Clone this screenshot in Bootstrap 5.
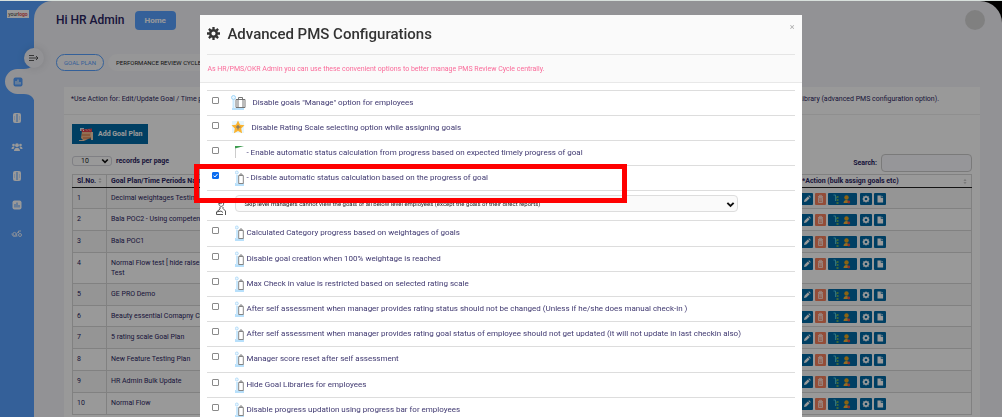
<!DOCTYPE html>
<html lang="en">
<head>
<meta charset="utf-8">
<meta name="viewport" content="width=device-width, initial-scale=1">
<title>Advanced PMS Configurations</title>
<link rel="stylesheet" href="https://cdn.jsdelivr.net/npm/bootstrap@5.3.0/dist/css/bootstrap.min.css">
<style>
body{font-family:Roboto,"Liberation Sans",sans-serif;font-size:8px;line-height:10px;color:#2a2462;background:#000}
.shell{border-top:1px solid #d8e0dc;background:linear-gradient(to right,#57a1ff 50%,#000 50%);min-height:100vh}
.side{width:34px;background:#57a1ff;z-index:2}
.side a{height:29px}
.side .brand{margin:9px 0 0 7px;width:22px;height:8px;background:#fff;font-size:5px;line-height:8px;color:#333;text-decoration:none}
.brand b{color:#d33;font-weight:500}
.side .current{height:49px;margin:39px 0 -3px;position:relative}
.current .notch{position:absolute;left:0;top:0}
.current .glyph{position:relative}
.toggler{position:absolute;left:24px;top:47px;width:20px;height:20px;background:#f3f3f8;z-index:3;box-shadow:0 0 8px rgba(0,0,0,.12)}
.page{background:#f3f3f8;border-radius:18px 22px 0 0;padding:0 22px 0 22px;min-height:100vh}
.hello{font-size:12px;line-height:16px;font-weight:500;margin:0 2px 0 0}
.topline{padding:9px 0 0;margin-right:-5px}
.home-btn{background:#57a1ff;color:#fff;font-size:8px;font-weight:700;line-height:9px;padding:5px 10px;border-radius:4px;border:0}
.avatar{width:20px;height:20px;background:#d6d6d6}
.tabs{margin-top:24px;gap:4px}
.tabs a{font-size:6px;line-height:9px;padding:3px 7px;border-radius:9px;background:#fafafc;color:#222;text-decoration:none;border:1px solid #fafafc;white-space:nowrap}
.tabs a.on{border-color:#57a1ff;color:#57a1ff}
.panel{background:#fff;margin:16px 0 0 8px}
.panel-note{padding:7px 41px 10px 7px;border-bottom:1px solid #eee;white-space:nowrap;font-size:7px;line-height:10px}
.panel-main{padding:9px 8px 8px}
.add-btn{background:#006aa5;color:#fff;font-size:7px;font-weight:700;line-height:10px;padding:3px 6px 3px 7px;border:0;border-radius:0}
.count-row{margin-top:10px;font-weight:700;font-size:7px}
.len-select{width:40px;height:10px;border:1px solid #d5d5dd;border-radius:3px;font-size:7px;line-height:8px;padding:0 0 0 8px;background:#fff;color:#222;appearance:none}
.chev{position:absolute;right:3px;top:1px;pointer-events:none}
.search-box{width:91px;height:18px;border:1px solid #ccc;border-radius:4px;background:#fbfbff}
.plans{width:100%;border-collapse:collapse;margin-top:2px;border:1px solid #d8d8d8}
.plans th{height:13px;padding:0 0 0 4px;border-bottom:1px solid #222;border-right:1px solid #d8d8d8;white-space:nowrap;font-weight:700;font-size:7px;line-height:11px}
.plans td{height:22px;padding:5px 0 0 4px;vertical-align:top;border:1px solid #d8d8d8;font-size:7px;white-space:nowrap}
.plans tr:nth-child(odd) td{background:#f8f8f8}
.plans tbody tr:first-child td{height:21px;border-top-color:#222}
.plans tbody tr:nth-child(6n) td{height:21px}
.plans tbody tr:nth-child(4) td{height:31px}
.plans tbody td:last-child{padding:5px 0 0 3px}
.act{background:#006aa5;border:0;border-radius:1px;width:12px;height:12px;padding:0}
.act.del{background:#f6805e;width:11px}
.act.wide{width:29px;margin-right:1px}
.pager button{height:12px;border:1px solid #ccc;background:#fff;padding:0}
.pager .word{width:46px}
.pager .next{width:35px}
.pager .num{width:16px}
.veil{position:fixed;inset:1px 0 0;background:rgba(0,0,0,.4);z-index:5}
.modal{z-index:6;overflow:hidden}
.config{width:60%;max-width:none;margin:15px auto 0}
.config .modal-content{border:0;border-radius:2px;color:#3f3870}
.config-head{background:#fafafa;border-bottom:1px solid #e8e8e8;padding:0 7px}
.config-title{border-bottom:1px solid #e5e5e5;height:40px;padding-bottom:2px;gap:7px}
.config-title h1{font-size:15px;line-height:20px;font-weight:500;color:#333;margin:0}
.closer{position:absolute;right:7px;top:7px;border:0;background:none;padding:0;font-size:9px;line-height:10px;color:#aaa}
.hint{color:#fa6b9a;font-size:7px;line-height:10px;margin:0;padding:9px 0 8px}
.options{margin:7px 7px 0;padding:0;list-style:none;border-top:1px solid #ddd}
.options li{height:25px;border-bottom:1px solid #ddd;position:relative}
.options li.tall{height:26px}
.options li.pick{height:30px;padding:4px 0 0 8px}
.options input{appearance:none;width:7px;height:7px;margin:6px 12px 0 5px;flex:none;border:1px solid #8a8a8a;border-radius:1px;background:#fff}
.options input:checked{border-color:#0b6cf0;background:#0b6cf0 url("data:image/svg+xml,%3Csvg xmlns='http://www.w3.org/2000/svg' viewBox='0 0 5 5'%3E%3Cpath d='M.5 2.600l1.400 1.400L4.600.9' fill='none' stroke='white'/%3E%3C/svg%3E")}
.options label{white-space:nowrap;padding:7px 0 0 2px;height:24px}
.options svg{flex:none}
.scope{width:100%;height:17px;border:1px solid #ddd;border-radius:4px;background:#fafafa;appearance:none;font-size:6px;line-height:10px;padding:0 8px;color:#222}
.scope-wrap{width:503px;max-width:88%;position:relative}
.marker{position:absolute;left:-13px;top:-2px;width:433px;height:39px;border:5px solid red;z-index:4;pointer-events:none}
</style>
</head>
<body class="overflow-hidden">
<svg class="d-none">
<symbol id="book" viewBox="0 0 10 10"><rect x="1" width="8" height="10" rx="2" fill="#fff"/><path d="M5 1v8" stroke="#57a1ff"/><path d="M2.500 3v4M7.500 3v4" stroke="#b5d4ff" stroke-width=".6"/></symbol>
<symbol id="chart" viewBox="0 0 10 10"><rect x=".5" y=".5" width="9" height="9" rx="2" fill="currentColor"/><path d="M3 4v3.500M5 2.500v5M7 5v2.500" stroke="var(--ink)" stroke-width="1"/></symbol>
<symbol id="people" viewBox="0 0 12 10"><g fill="#fff"><circle cx="6" cy="3.200" r="1.900"/><circle cx="2.500" cy="3" r="1.300"/><circle cx="9.500" cy="3" r="1.300"/><path d="M3 9c0-4.500 6-4.500 6 0zM.5 7C.5 4.500 3 4 3.500 5L2.500 7zM11.500 7C11.500 4.500 9 4 8.500 5l1 2z"/></g></symbol>
<symbol id="hands" viewBox="0 0 12 10"><g fill="none" stroke="#e4efff" stroke-width="1"><circle cx="3.500" cy="5" r="1.600"/><circle cx="9" cy="6" r="1.500"/><path d="M1 4.500c0 3 3 4 5 2M6 7.500c-1-2 0-4 1-4.500M7.500 4V2h2.500"/></g></symbol>
<symbol id="chev" viewBox="0 0 8 8"><path d="M1.200 2.500L4 5.300l2.800-2.800" fill="none" stroke="#111" stroke-width="1.700"/></symbol>
<symbol id="case" viewBox="0 0 9 16"><path d="M0 13h9v3H0z" fill="#b8e0fb"/><path d="M1 5h2v9H1z" fill="#c9e8fd"/><circle cx="1.800" cy="2.500" r="1.500" fill="#eaf6ff" stroke="#9fd3f7" stroke-width=".7"/><path d="M3.700 5.500h4.600v8H3.700zM5 5.500V4h2v1.500" fill="#fff" stroke="#858585" stroke-width="1"/></symbol>
<symbol id="casewide" viewBox="0 0 15 15"><path d="M1 13h12v2H1z" fill="#b8e0fb"/><path d="M1.500 5h2v8h-2z" fill="#c9e8fd"/><circle cx="2.500" cy="2.500" r="2" fill="#eaf6ff" stroke="#8ecbf5" stroke-width=".8"/><path d="M5 4.500h9v8H5zM7.500 4.500v-2h4v2M7 4.500v8M12 4.500v8" fill="#fff" stroke="#666" stroke-width=".9"/></symbol>
<symbol id="star" viewBox="0 0 14 14"><path d="M1 1h12v12H1z" fill="#e6f6fd"/><path d="M7 .5l2 4.300 4.500.5-3.300 3.200.9 4.800L7 11l-4.100 2.300.9-4.800L.5 5.300 5 4.800z" fill="#fbb32f"/><path d="M7 5v4.500M5 7h4.500" stroke="#6b6d72"/></symbol>
<symbol id="flag" viewBox="0 0 9 14"><path d="M.5 2v11" stroke="#ccc"/><path d="M0 1h9L1 3.300H0z" fill="#3c9c4f"/></symbol>
<symbol id="person" viewBox="0 0 12 17"><path d="M6 1.500c2.500 0 3 2 2.500 4C8 8 4.500 8 4 5.500 3.500 3.500 4 1.500 6 1.500zM5 8v2L1.500 13v2.500H8M8 8v1.500L10.500 12v4M1.500 13L6 12l2 1.500M4 4.500C6 5 7.500 4 8 3" fill="none" stroke="#555" stroke-width="1"/></symbol>
<symbol id="sorter" viewBox="0 0 5 8"><path d="M.5 3.300L2.500.5l2 2.800zM.5 4.700l2 2.800 2-2.800z" fill="#ccc"/></symbol>
<symbol id="pen" viewBox="0 0 12 12"><path d="M3 9l.5-2.300 3.300-3.300 1.800 1.800-3.300 3.300zM7.300 2.900l.8-.7 1.700 1.700-.7.800z" fill="#fff"/></symbol>
<symbol id="bin" viewBox="0 0 11 12"><path d="M3 3.500h5M4.500 3V2.300h2V3M3.500 4.500v5h4v-5zM5 5v3.500M6.200 5v3.500" fill="none" stroke="#ffe1d8" stroke-width=".9"/></symbol>
<symbol id="team" viewBox="0 0 29 12"><path d="M7.500 2v6M7.500 5H9M5.500 2h2" stroke="#4dc4d8" fill="none"/><path d="M8.500 4h2M8.500 7h2M8.500 10h2" stroke="#8ac34a" stroke-width="1.500"/><circle cx="18.500" cy="4.500" r="2.200" fill="#e8a51f"/><path d="M15.500 10c0-4 5.500-4 5.500 0z" fill="#f4b63a"/><circle cx="20.800" cy="9" r="1.400" fill="#ee5348"/></symbol>
<symbol id="cog" viewBox="0 0 12 12"><circle cx="6" cy="6" r="2.200" fill="none" stroke="#fff" stroke-width="1.700"/><path d="M6 2.500v1M6 8.500v1M2.500 6h1M8.500 6h1M3.500 3.500l.7.700M7.800 7.800l.7.700M3.500 8.500l.7-.7M7.800 4.200l.7-.7" stroke="#fff"/></symbol>
<symbol id="sheet" viewBox="0 0 12 12"><path d="M3.500 2.500h3.300v2.300h2.300V9.500H3.500zM7.500 2.500l1.600 1.600H7.500z" fill="#fff"/></symbol>
</svg>

<div class="shell d-flex position-relative">
  <nav class="side d-flex flex-column flex-shrink-0" aria-label="Main">
    <a class="brand text-center" href="#">your<b>logo</b></a>
    <a class="current d-flex align-items-center ps-3" href="#" aria-label="Goals">
      <svg class="notch" width="35" height="49" viewBox="0 0 35 49"><path d="M35 0c0 8-4 12-11 12h-6.500a12.500 12.500 0 0 0 0 25H24c7 0 11 4 11 12z" fill="#f3f3f8"/></svg>
      <svg class="glyph" width="10" height="10" style="color:#57a1ff;--ink:#fff;margin-left:-3px"><use href="#chart"/></svg></a>
    <a class="d-flex align-items-center justify-content-center" href="#" aria-label="Reviews"><svg width="10" height="10"><use href="#book"/></svg></a>
    <a class="d-flex align-items-center justify-content-center" href="#" aria-label="Team"><svg width="12" height="10"><use href="#people"/></svg></a>
    <a class="d-flex align-items-center justify-content-center" href="#" aria-label="Journal"><svg width="10" height="10"><use href="#book"/></svg></a>
    <a class="d-flex align-items-center justify-content-center" href="#" aria-label="Reports"><svg width="10" height="10" style="color:#fff;--ink:#57a1ff"><use href="#chart"/></svg></a>
    <a class="d-flex align-items-center justify-content-center" href="#" aria-label="Feedback"><svg width="12" height="10"><use href="#hands"/></svg></a>
  </nav>
  <button class="toggler rounded-circle border-0 p-0 d-flex align-items-center justify-content-center" aria-label="Toggle menu"><svg width="10" height="8" viewBox="0 0 10 8"><path d="M0 1.500h5M0 4h9M0 6.500h5M7 2l2 2-2 2" fill="none" stroke="#333" stroke-width=".8"/></svg></button>

  <main class="page flex-grow-1">
    <header class="topline d-flex align-items-center">
      <h2 class="hello">Hi HR Admin</h2>
      <button class="home-btn ms-2">Home</button>
      <span class="avatar rounded-circle ms-auto"></span>
    </header>
    <nav class="tabs d-flex" aria-label="Sections">
      <a class="on" href="#">GOAL PLAN</a><a href="#">PERFORMANCE REVIEW CYCLE</a>
    </nav>
    <section class="panel">
      <div class="panel-note d-flex justify-content-between"><span>*Use Action for: Edit/Update Goal / Time periods</span><span>from Library (advanced PMS configuration option).</span></div>
      <div class="panel-main">
        <button class="add-btn d-inline-flex align-items-center gap-1"><svg width="15" height="14" viewBox="0 0 15 14"><path d="M1 1h4v3H1z" fill="#cfe9f5"/><path d="M3 4l8-2 2 8-8 4-3-3z" fill="#f6b98b"/><path d="M2 2.500l11-1v3.500H3z" fill="#e5404b"/><path d="M4 3l1 1M7 2.500l1 1M10 2.500l1 1" stroke="#fff"/><path d="M3 8h8M4 11h9" stroke="#d9713d"/><path d="M0 13h5v1H0zM12 5h2v8h-2z" fill="#f2d4b5"/></svg>Add Goal Plan</button>
        <div class="count-row d-flex align-items-center">
          <div class="position-relative d-flex me-1 mb-1"><select id="len" class="len-select"><option>10</option></select><svg class="chev" width="8" height="8"><use href="#chev"/></svg></div>
          <label for="len" class="mb-1">records per page</label>
          <label for="find" class="ms-auto me-1">Search:</label><input id="find" class="search-box">
        </div>
        <table class="plans">
          <colgroup><col style="width:34px"><col><col style="width:174px"></colgroup>
          <thead><tr><th>Sl.No. <svg width="4" height="7"><use href="#sorter"/></svg></th><th>Goal Plan/Time Periods Name</th><th><div class="d-flex justify-content-between align-items-center pe-1">*Action (bulk assign goals etc)<svg width="4" height="7"><use href="#sorter"/></svg></div></th></tr></thead>
          <tbody id="plans"></tbody>
        </table>
        <div class="pager d-flex justify-content-end mt-1"><button class="word" aria-label="Previous"></button><button class="num" aria-label="Page 1"></button><button class="num" aria-label="Page 2"></button><button class="num" aria-label="Page 3"></button><button class="next" aria-label="Next"></button></div>
      </div>
    </section>
  </main>
</div>
<div class="veil"></div>

<div class="modal d-block" role="dialog" aria-labelledby="cfg">
  <div class="modal-dialog config">
    <div class="modal-content">
      <div class="config-head">
        <div class="config-title d-flex align-items-center">
          <svg width="13" height="13" viewBox="0 0 13 13"><circle cx="6.500" cy="6.500" r="3.300" fill="none" stroke="#333" stroke-width="2.500"/><path d="M6.500 0v2.500M6.500 10.500V13M0 6.500h2.500M10.500 6.500H13M1.900 1.900l1.700 1.700M9.400 9.400l1.700 1.700M1.900 11.100l1.700-1.700M9.400 3.600l1.700-1.700" stroke="#333" stroke-width="2.300"/></svg>
          <h1 id="cfg">Advanced PMS Configurations</h1>
        </div>
        <button class="closer" aria-label="Close">×</button>
        <p class="hint">As HR/PMS/OKR Admin you can use these convenient options to better manage PMS Review Cycle centrally.</p>
      </div>
      <ul class="options" id="options"></ul>
    </div>
  </div>
</div>
<script src="https://cdn.jsdelivr.net/npm/bootstrap@5.3.0/dist/js/bootstrap.bundle.min.js"></script>
<script>
const icon=(id,w,h,cls='')=>`<svg class="${cls}" width="${w}" height="${h}"><use href="#${id}"/></svg>`;
const act=(id,w,label,cls='')=>`<button class="act d-flex ${cls}" aria-label="${label}">${icon(id,w,12)}</button>`;
const plans=['Decimal weightages Testing','Bala POC2 - Using competency','Bala POC1','Normal Flow test [ hide raise<br>Test','GE PRO Demo','Beauty essential Comapny CRM','5 rating scale Goal Plan','New Feature Testing Plan','HR Admin Bulk Update','Normal Flow'];
document.getElementById('plans').innerHTML=plans.map((p,i)=>`<tr><td>${i+1}</td><td>${p}</td><td><div class="d-flex">
<div class="d-flex" style="gap:2px">${act('pen',12,'Edit')}${act('bin',11,'Delete','del')}${act('team',29,'Assign','wide')}${act('cog',12,'Settings')}${act('sheet',12,'Report')}</div></div></td></tr>`).join('');
const options=[
['Disable goals "Manage" option for employees','casewide'],
['Disable Rating Scale selecting option while assigning goals','star'],
['- Enable automatic status calculation from progress based on expected timely progress of goal','flag'],
['- Disable automatic status calculation based on the progress of goal','case',1],
null,
['Calculated Category progress based on weightages of goals','case'],
['Disable goal creation when 100% weightage is reached','case'],
['Max Check in value is restricted based on selected rating scale','case'],
['After self assessment when manager provides rating status should not be changed (Unless if he/she does manual check-in )','case'],
['After self assessment when manager provides rating goal status of employee should not get updated (it will not update in last checkin also)','case'],
['Manager score reset after self assessment','case'],
['Hide Goal Libraries for employees','case'],
['Disable progress updation using progress bar for employees','case']];
const size={casewide:[15,15,'me-1 mt-1'],star:[14,14,'me-1 mt-1'],flag:[9,14,'ms-1 mt-1'],case:[9,16,'ms-1 mt-1']};
document.getElementById('options').innerHTML=options.map((o,i)=>{
 if(!o)return `<li class="pick d-flex">${icon('person',12,17,'mt-1 me-2')}<div class="scope-wrap"><select class="scope" aria-label="Manager visibility"><option>Skip level managers cannot view the goals of all below level employees (except the goals of their direct reports)</option></select>${icon('chev',9,9,'chev mt-1')}</div></li>`;
 const [w,h,c]=size[o[1]];
 return `<li class="d-flex ${i==5||i==10?'tall':''}"><input type="checkbox" id="o${i}" ${o[2]?'checked':''}>${icon(o[1],w,h,c)}<label for="o${i}">${o[0]}</label>${o[2]?'<span class="marker"></span>':''}</li>`}).join('');
</script>
</body>
</html>
